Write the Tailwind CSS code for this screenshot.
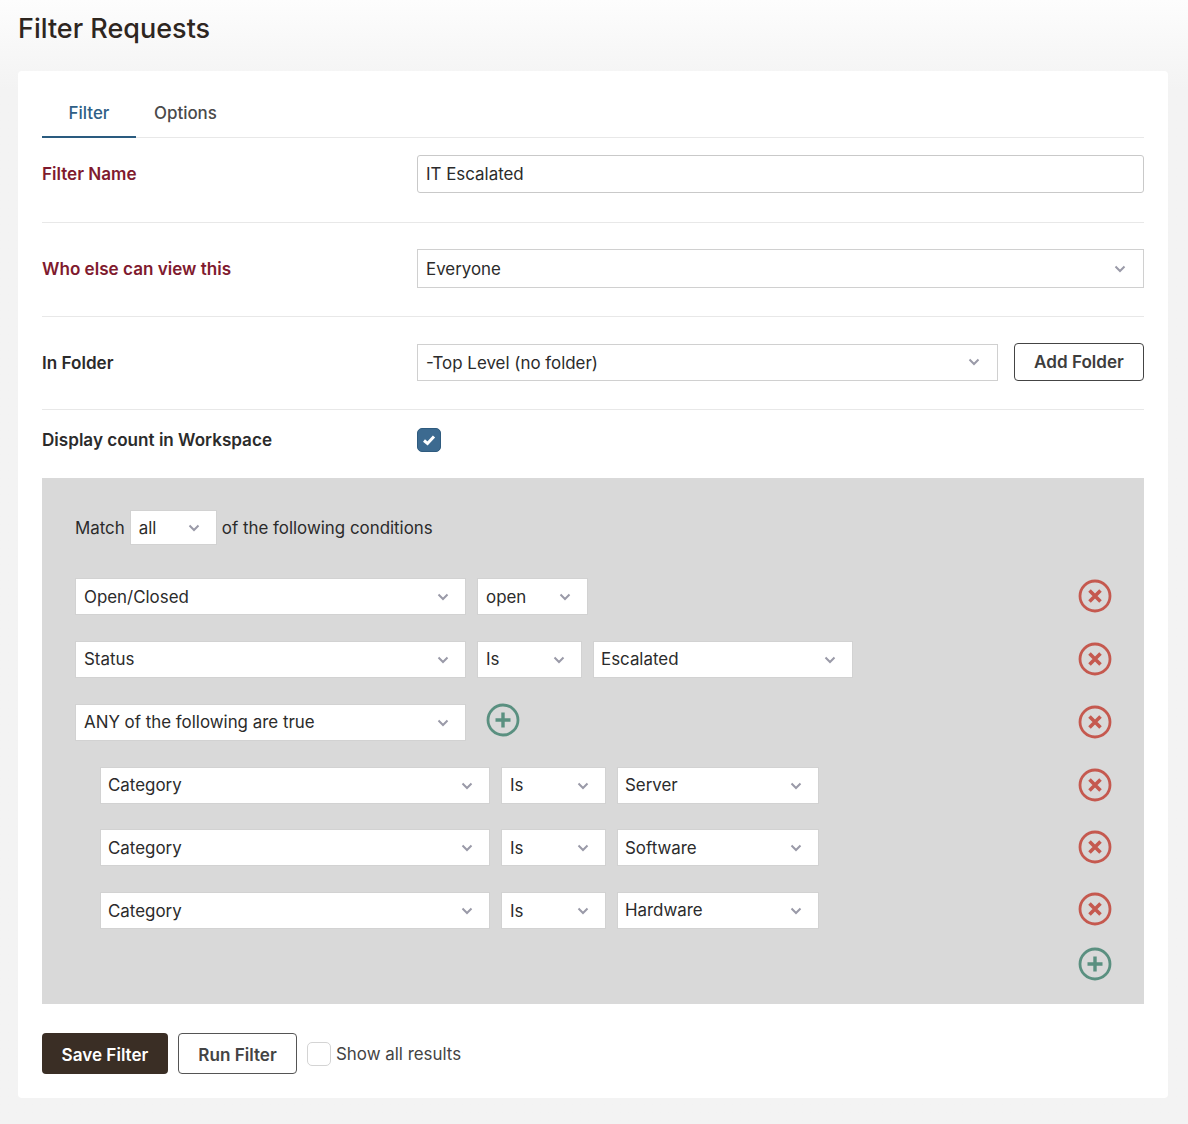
<!DOCTYPE html>
<html lang="en">

<head>
    <meta charset="UTF-8" />
    <title>Filter Requests</title>
    <script src="https://cdn.jsdelivr.net/npm/@tailwindcss/browser@4"></script>
</head>

<body class="bg-gradient-to-b from-[#fdfdfd] to-[#f3f3f3] to-[8%] h-[1124px] overflow-hidden font-['Inter',sans-serif] text-[#2b2b2b] text-[16.9px]">
    <h1 class="pl-[18px] pt-[13px] h-[71px] text-[27px] leading-[32px] font-medium text-[#2e261f]">Filter Requests</h1>

    <div class="ml-[18px] w-[1150px] h-[1027px] bg-white rounded px-[24px]">
        <!-- Tabs -->
        <div class="flex h-[67px] items-end border-b border-[#e8e8e8]">
            <div class="w-[94px] h-[48px] pt-[2px] flex items-center justify-center -mb-px border-b-2 border-[#2a5b7f] font-medium text-[#2f6086]">Filter</div>
            <div class="ml-[18px] h-[48px] pt-[2px] flex items-center font-medium text-[#4a4a4a]">Options</div>
        </div>

        <div class="flex items-center h-[85px] pb-[13px] border-b border-[#e8e8e8]">
            <label class="w-[375px] text-[17.1px] font-semibold text-[#7f1a2e]">Filter Name</label>
            <div class="flex-1 h-[38px] flex items-center px-[8px] border border-[#c9c9c9] rounded-[3px]"><span class="pt-[2px]">IT Escalated</span></div>
        </div>

        <div class="flex items-center h-[94px] pb-[2px] border-b border-[#e8e8e8]">
            <label class="w-[375px] text-[17.1px] font-semibold text-[#7f1a2e]">Who else can view this</label>
            <div class="flex-1 h-[39px] flex items-center justify-between pl-[8px] pr-[16px] border border-[#d0d0d0]">
                <span class="pt-[2px]">Everyone</span>
                <svg class="w-[14px] h-[14px] text-[#9a9aa8]" viewBox="0 0 14 14" fill="none" stroke="currentColor" stroke-width="2"><path d="M2.500 4.500 7 9l4.500-4.500" /></svg>
            </div>
        </div>

        <div class="flex items-center h-[93px] pb-[2px] border-b border-[#e8e8e8]">
            <label class="w-[375px] pt-[2px] text-[17.1px] font-semibold">In Folder</label>
            <div class="w-[581px] h-[37px] flex items-center justify-between pl-[8px] pr-[16px] border border-[#d0d0d0]">
                <span class="pt-[4px]">-Top Level (no folder)</span>
                <svg class="w-[14px] h-[14px] text-[#9a9aa8]" viewBox="0 0 14 14" fill="none" stroke="currentColor" stroke-width="2"><path d="M2.500 4.500 7 9l4.500-4.500" /></svg>
            </div>
            <button class="ml-[16px] w-[130px] h-[38px] border border-[#444] rounded-[4px] text-[17.1px] font-semibold text-[#3d3d3d]">Add Folder</button>
        </div>

        <div class="flex items-center h-[61px] pb-[1px]">
            <label class="w-[375px] text-[17.1px] font-semibold">Display count in Workspace</label>
            <div class="w-[24px] h-[24px] flex items-center justify-center rounded-[5px] bg-[#3c6a90] border border-[#2f5b7f]">
                <svg class="w-[14px] h-[14px]" viewBox="0 0 14 14" fill="none" stroke="white" stroke-width="3"><path d="M2 7.500 5.500 10.500 12 3.500" /></svg>
            </div>
        </div>

        <!-- Conditions -->
        <div class="h-[526px] mt-[7px] bg-[#d9d9d9] pl-[33px] pr-[32px] pt-[32px]">
            <div class="flex items-center h-[35px]">
                <span class="pt-[2px]">Match</span>
                <div class="ml-[5px] w-[87px] h-[35px] flex items-center justify-between pl-[9px] pr-[16px] bg-white shadow-[inset_0_0_0_1px_#d2d2d2]">
                    <span class="pt-[2px]">all</span>
                    <svg class="w-[14px] h-[14px] text-[#9a9aa8]" viewBox="0 0 14 14" fill="none" stroke="currentColor" stroke-width="2"><path d="M2.500 4.500 7 9l4.500-4.500" /></svg>
                </div>
                <span class="ml-[5px] pt-[2px]">of the following conditions</span>
            </div>

            <div class="mt-[33px] flex items-center h-[37px] gap-[11px]">
                <div class="w-[391px] h-[37px] flex items-center justify-between pl-[9px] pr-[16px] bg-white shadow-[inset_0_0_0_1px_#d2d2d2]"><span class="pt-[3px]">Open/Closed</span><svg class="w-[14px] h-[14px] text-[#9a9aa8]" viewBox="0 0 14 14" fill="none" stroke="currentColor" stroke-width="2"><path d="M2.500 4.500 7 9l4.500-4.500" /></svg></div>
                <div class="w-[111px] h-[37px] flex items-center justify-between pl-[9px] pr-[16px] bg-white shadow-[inset_0_0_0_1px_#d2d2d2]"><span class="pt-[3px]">open</span><svg class="w-[14px] h-[14px] text-[#9a9aa8]" viewBox="0 0 14 14" fill="none" stroke="currentColor" stroke-width="2"><path d="M2.500 4.500 7 9l4.500-4.500" /></svg></div>
                <svg class="ml-auto -mt-[2px] w-[34px] h-[34px] text-[#c5594f]" viewBox="0 0 34 34" fill="none" stroke="currentColor"><circle cx="17" cy="17" r="15" stroke-width="2.800" /><path d="M11.500 11.500l11 11M22.500 11.500l-11 11" stroke-width="3.600" /></svg>
            </div>

            <div class="mt-[26px] flex items-center h-[37px] gap-[11px]">
                <div class="w-[391px] h-[37px] flex items-center justify-between pl-[9px] pr-[16px] bg-white shadow-[inset_0_0_0_1px_#d2d2d2]"><span class="pt-[1px]">Status</span><svg class="w-[14px] h-[14px] text-[#9a9aa8]" viewBox="0 0 14 14" fill="none" stroke="currentColor" stroke-width="2"><path d="M2.500 4.500 7 9l4.500-4.500" /></svg></div>
                <div class="w-[105px] h-[37px] flex items-center justify-between pl-[9px] pr-[16px] bg-white shadow-[inset_0_0_0_1px_#d2d2d2]"><span class="pt-[1px]">Is</span><svg class="w-[14px] h-[14px] text-[#9a9aa8]" viewBox="0 0 14 14" fill="none" stroke="currentColor" stroke-width="2"><path d="M2.500 4.500 7 9l4.500-4.500" /></svg></div>
                <div class="w-[260px] h-[37px] flex items-center justify-between pl-[8px] pr-[16px] bg-white shadow-[inset_0_0_0_1px_#d2d2d2]"><span class="pt-[1px]">Escalated</span><svg class="w-[14px] h-[14px] text-[#9a9aa8]" viewBox="0 0 14 14" fill="none" stroke="currentColor" stroke-width="2"><path d="M2.500 4.500 7 9l4.500-4.500" /></svg></div>
                <svg class="ml-auto -mt-[2px] w-[34px] h-[34px] text-[#c5594f]" viewBox="0 0 34 34" fill="none" stroke="currentColor"><circle cx="17" cy="17" r="15" stroke-width="2.800" /><path d="M11.500 11.500l11 11M22.500 11.500l-11 11" stroke-width="3.600" /></svg>
            </div>

            <div class="mt-[26px] flex items-center h-[37px] gap-[20px]">
                <div class="w-[391px] h-[37px] flex items-center justify-between pl-[9px] pr-[16px] bg-white shadow-[inset_0_0_0_1px_#d2d2d2]"><span class="pt-[1px]">ANY of the following are true</span><svg class="w-[14px] h-[14px] text-[#9a9aa8]" viewBox="0 0 14 14" fill="none" stroke="currentColor" stroke-width="2"><path d="M2.500 4.500 7 9l4.500-4.500" /></svg></div>
                <svg class="-mt-[5px] w-[34px] h-[34px] text-[#5a9080]" viewBox="0 0 34 34" fill="none" stroke="currentColor"><circle cx="17" cy="17" r="15" stroke-width="2.800" /><path d="M17 9.500v15M9.500 17h15" stroke-width="3.400" /></svg>
                <svg class="ml-auto -mt-[2px] w-[34px] h-[34px] text-[#c5594f]" viewBox="0 0 34 34" fill="none" stroke="currentColor"><circle cx="17" cy="17" r="15" stroke-width="2.800" /><path d="M11.500 11.500l11 11M22.500 11.500l-11 11" stroke-width="3.600" /></svg>
            </div>

            <div class="mt-[26px] pl-[25px] flex items-center h-[37px] gap-[11px]">
                <div class="w-[390px] h-[37px] flex items-center justify-between pl-[8px] pr-[16px] bg-white shadow-[inset_0_0_0_1px_#d2d2d2]">Category<svg class="w-[14px] h-[14px] text-[#9a9aa8]" viewBox="0 0 14 14" fill="none" stroke="currentColor" stroke-width="2"><path d="M2.500 4.500 7 9l4.500-4.500" /></svg></div>
                <div class="w-[105px] h-[37px] flex items-center justify-between pl-[9px] pr-[16px] bg-white shadow-[inset_0_0_0_1px_#d2d2d2]">Is<svg class="w-[14px] h-[14px] text-[#9a9aa8]" viewBox="0 0 14 14" fill="none" stroke="currentColor" stroke-width="2"><path d="M2.500 4.500 7 9l4.500-4.500" /></svg></div>
                <div class="w-[202px] h-[37px] flex items-center justify-between pl-[8px] pr-[16px] bg-white shadow-[inset_0_0_0_1px_#d2d2d2]">Server<svg class="w-[14px] h-[14px] text-[#9a9aa8]" viewBox="0 0 14 14" fill="none" stroke="currentColor" stroke-width="2"><path d="M2.500 4.500 7 9l4.500-4.500" /></svg></div>
                <svg class="ml-auto -mt-[2px] w-[34px] h-[34px] text-[#c5594f]" viewBox="0 0 34 34" fill="none" stroke="currentColor"><circle cx="17" cy="17" r="15" stroke-width="2.800" /><path d="M11.500 11.500l11 11M22.500 11.500l-11 11" stroke-width="3.600" /></svg>
            </div>

            <div class="mt-[25px] pl-[25px] flex items-center h-[37px] gap-[11px]">
                <div class="w-[390px] h-[37px] flex items-center justify-between pl-[8px] pr-[16px] bg-white shadow-[inset_0_0_0_1px_#d2d2d2]"><span class="pt-[2px]">Category</span><svg class="w-[14px] h-[14px] text-[#9a9aa8]" viewBox="0 0 14 14" fill="none" stroke="currentColor" stroke-width="2"><path d="M2.500 4.500 7 9l4.500-4.500" /></svg></div>
                <div class="w-[105px] h-[37px] flex items-center justify-between pl-[9px] pr-[16px] bg-white shadow-[inset_0_0_0_1px_#d2d2d2]"><span class="pt-[2px]">Is</span><svg class="w-[14px] h-[14px] text-[#9a9aa8]" viewBox="0 0 14 14" fill="none" stroke="currentColor" stroke-width="2"><path d="M2.500 4.500 7 9l4.500-4.500" /></svg></div>
                <div class="w-[202px] h-[37px] flex items-center justify-between pl-[8px] pr-[16px] bg-white shadow-[inset_0_0_0_1px_#d2d2d2]"><span class="pt-[2px]">Software</span><svg class="w-[14px] h-[14px] text-[#9a9aa8]" viewBox="0 0 14 14" fill="none" stroke="currentColor" stroke-width="2"><path d="M2.500 4.500 7 9l4.500-4.500" /></svg></div>
                <svg class="ml-auto -mt-[2px] w-[34px] h-[34px] text-[#c5594f]" viewBox="0 0 34 34" fill="none" stroke="currentColor"><circle cx="17" cy="17" r="15" stroke-width="2.800" /><path d="M11.500 11.500l11 11M22.500 11.500l-11 11" stroke-width="3.600" /></svg>
            </div>

            <div class="mt-[26px] pl-[25px] flex items-center h-[37px] gap-[11px]">
                <div class="w-[390px] h-[37px] flex items-center justify-between pl-[8px] pr-[16px] bg-white shadow-[inset_0_0_0_1px_#d2d2d2]"><span class="pt-[2px]">Category</span><svg class="w-[14px] h-[14px] text-[#9a9aa8]" viewBox="0 0 14 14" fill="none" stroke="currentColor" stroke-width="2"><path d="M2.500 4.500 7 9l4.500-4.500" /></svg></div>
                <div class="w-[105px] h-[37px] flex items-center justify-between pl-[9px] pr-[16px] bg-white shadow-[inset_0_0_0_1px_#d2d2d2]"><span class="pt-[2px]">Is</span><svg class="w-[14px] h-[14px] text-[#9a9aa8]" viewBox="0 0 14 14" fill="none" stroke="currentColor" stroke-width="2"><path d="M2.500 4.500 7 9l4.500-4.500" /></svg></div>
                <div class="w-[202px] h-[37px] flex items-center justify-between pl-[8px] pr-[16px] bg-white shadow-[inset_0_0_0_1px_#d2d2d2]">Hardware<svg class="w-[14px] h-[14px] text-[#9a9aa8]" viewBox="0 0 14 14" fill="none" stroke="currentColor" stroke-width="2"><path d="M2.500 4.500 7 9l4.500-4.500" /></svg></div>
                <svg class="ml-auto -mt-[4px] w-[34px] h-[34px] text-[#c5594f]" viewBox="0 0 34 34" fill="none" stroke="currentColor"><circle cx="17" cy="17" r="15" stroke-width="2.800" /><path d="M11.500 11.500l11 11M22.500 11.500l-11 11" stroke-width="3.600" /></svg>
            </div>

            <div class="mt-[18px] flex justify-end">
                <svg class="w-[34px] h-[34px] text-[#5a9080]" viewBox="0 0 34 34" fill="none" stroke="currentColor"><circle cx="17" cy="17" r="15" stroke-width="2.800" /><path d="M17 9.500v15M9.500 17h15" stroke-width="3.400" /></svg>
            </div>
        </div>

        <!-- Actions -->
        <div class="mt-[29px] flex items-center">
            <button class="w-[126px] h-[41px] pt-[3px] rounded-[4px] bg-[#3a2e25] text-[17.1px] font-semibold text-white">Save Filter</button>
            <button class="ml-[10px] w-[119px] h-[41px] pt-[3px] rounded-[4px] border border-[#555] text-[17.1px] font-semibold text-[#444]">Run Filter</button>
            <div class="ml-[10px] w-[24px] h-[24px] rounded-[5px] border border-[#d4d4d4]"></div>
            <span class="ml-[5px] pt-[3px] text-[#444]">Show all results</span>
        </div>
    </div>
</body>

</html>
